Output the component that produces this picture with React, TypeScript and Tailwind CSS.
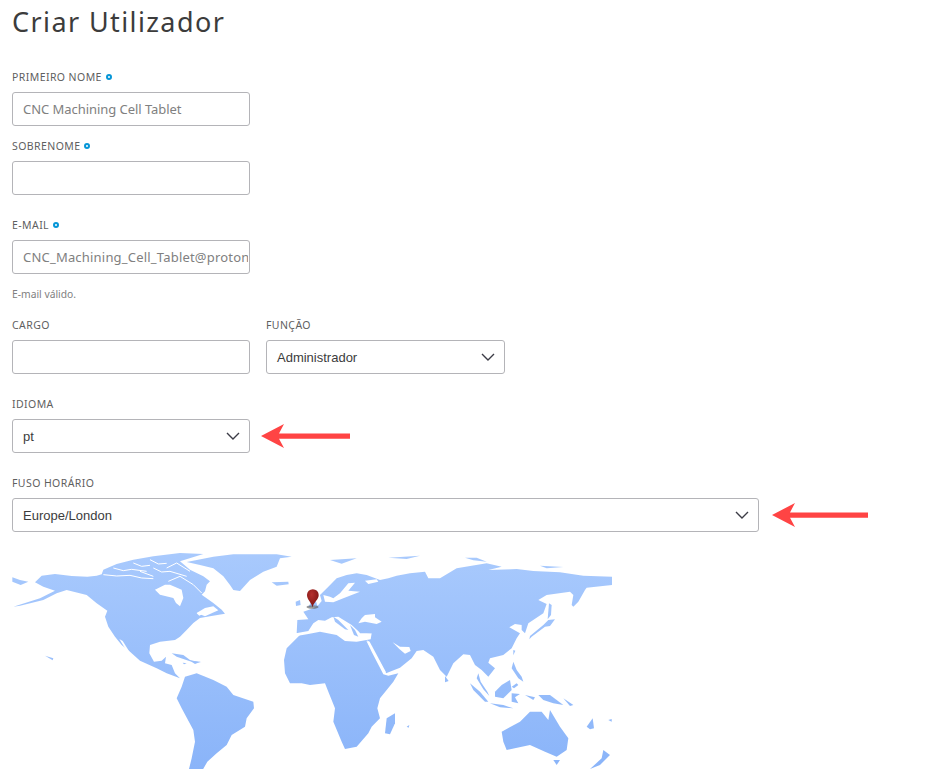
import React from "react";

const F = "[font-family:'Noto_Sans',sans-serif]";

function Dot() {
  return <span className="inline-block w-[6px] h-[6px] rounded-full border-[2px] border-[#0696d7] ml-[4px] mt-[-1px]" />;
}

function Label({ text, req }: { text: string; req?: boolean }) {
  return (
    <div className="flex items-center h-[14px] text-[10.5px] leading-[14px] tracking-[0.42px] text-[#5f5f5f] [font-family:'Noto_Sans',sans-serif]">
      {text}
      {req && <Dot />}
    </div>
  );
}

function TextBox({ value, className }: { value?: string; className?: string }) {
  return (
    <input
      readOnly
      defaultValue={value}
      className={`block w-[238px] h-[34px] mt-[8px] rounded-[3px] border border-[#b4b4b8] bg-white pl-[10px] pr-[1px] text-[13px] text-[#808080] outline-none [font-family:'Noto_Sans',sans-serif] ${className ?? ""}`}
    />
  );
}

function Chevron() {
  return (
    <svg width="14" height="8" viewBox="0 0 14 8" fill="none" className="shrink-0">
      <path d="M1 1 L7 7 L13 1" stroke="#3c3c46" strokeWidth="1.4" />
    </svg>
  );
}

function SelectBox({ value, className }: { value: string; className: string }) {
  return (
    <div className={`flex items-center justify-between h-[34px] mt-[8px] rounded-[3px] border border-[#b4b4b8] bg-white pl-[10px] pr-[9px] text-[13px] text-[#3c3c3c] [font-family:'Liberation_Sans',sans-serif] ${className}`}>
      <span className="mt-[1px]">{value}</span>
      <Chevron />
    </div>
  );
}

function Arrow({ w, className }: { w: number; className?: string }) {
  return (
    <svg width={w} height="24" viewBox={`0 0 ${w} 24`} className={`shrink-0 ${className ?? ""}`}>
      <path d={`M0 12 L23 0 L18 9.4 L${w} 9.4 L${w} 14.8 L18 14.8 L23 24 Z`} fill="#ff4444" />
    </svg>
  );
}

function WorldMap() {
  const z3 = "translate(0 545) scale(0.33333)";
  const z4 = "translate(300 545) scale(0.33333)";
  const cA = "translate(90 548) scale(0.33333)";
  const cB = "translate(280 570) scale(0.33333)";
  const cC = "translate(470 590) scale(0.33333)";
  const cD = "translate(140 630) scale(0.33333)";
  return (
    <svg width="600" height="221" viewBox="12 548 600 221" className="block mt-[16px]">
      <defs>
        <linearGradient id="land" gradientUnits="userSpaceOnUse" x1="0" y1="548" x2="0" y2="769">
          <stop offset="0" stopColor="#a9cafd" />
          <stop offset="1" stopColor="#8ab4f9" />
        </linearGradient>
        <radialGradient id="pin" cx="0.4" cy="0.3" r="0.7">
          <stop offset="0" stopColor="#b5302c" />
          <stop offset="1" stopColor="#7c1512" />
        </radialGradient>
        <filter id="soft" filterUnits="userSpaceOnUse" x="12" y="548" width="600" height="221">
          <feGaussianBlur stdDeviation="0.5" />
        </filter>
        <mask id="landmask" maskUnits="userSpaceOnUse" x="12" y="548" width="600" height="221">
          <g filter="url(#soft)">
            <g fill="#fff">
              <g transform={z3}>
                <path d="M37 97 L60 105 L85 110 L62 120 L37 110 Z" />
                <path d="M40 185 L120 160 L165 137 L130 125 L105 112 L125 92 L165 87 L215 93 L262 95 L290 92 L305 88 L310 74 L350 57 L400 44 L460 34 L540 24 L610 27 L540 49 L570 74 L610 94 L630 109 L620 119 L615 139 L605 149 L640 174 L665 194 L675 206 L630 214 L600 219 L580 234 L560 255 L540 275 L525 285 L480 290 L450 300 L448 325 L462 350 L485 347 L498 335 L495 355 L515 360 L525 385 L540 400 L500 385 L470 370 L420 347 L390 320 L365 300 L345 275 L325 245 L315 215 L322 197 L290 175 L260 150 L200 135 L170 145 L130 165 L60 182 Z" />
                <path d="M560 51 L640 35 L700 28 L830 28 L875 35 L840 40 L830 65 L790 80 L750 105 L720 138 L700 135 L690 120 L670 94 L640 70 L600 60 Z" />
                <path d="M815 112 L865 110 L866 118 L830 122 Z" />
                <path d="M555 395 L590 385 L640 405 L680 425 L700 450 L760 470 L762 490 L740 520 L735 545 L695 570 L680 600 L650 625 L622 650 L605 680 L565 680 L575 640 L585 590 L580 555 L545 490 L530 460 L545 425 Z" />
                <path d="M135 332 L160 340 L158 346 Z" />
              </g>
              <g transform={z4}>
                <path d="M-8 225 L25 223 L10 200 L40 190 L55 180 L65 168 L60 150 L85 125 L110 100 L140 90 L170 85 L200 90 L240 105 L265 100 L290 92 L330 85 L375 80 L385 100 L420 100 L470 70 L560 55 L605 65 L565 75 L650 72 L700 78 L780 82 L850 92 L936 95 L936 120 L860 128 L855 135 L835 170 L820 185 L815 180 L820 150 L810 140 L740 150 L715 165 L740 177 L730 205 L685 235 L675 265 L665 255 L665 240 L645 237 L628 247 L660 265 L650 280 L635 310 L610 330 L570 340 L565 353 L585 370 L565 395 L545 375 L525 360 L510 330 L490 328 L460 355 L440 395 L420 375 L400 335 L370 315 L350 318 L335 340 L300 368 L258 385 L245 360 L205 292 L195 285 L100 290 L40 290 L-10 265 Z" />
                <path d="M-48 345 L-40 310 L5 265 L85 258 L125 270 L150 282 L198 285 L215 320 L250 388 L265 392 L295 385 L280 410 L240 460 L232 490 L240 520 L215 545 L205 565 L170 605 L135 612 L125 590 L100 530 L105 490 L85 440 L75 415 L30 420 L5 415 L-30 415 L-45 385 Z" />
                <path d="M90 45 L170 40 L125 56 Z" />
                <path d="M265 38 L360 32 L320 42 Z" />
                <path d="M495 38 L530 38 L560 50 L520 46 Z" />
                <path d="M720 62 L790 66 L740 70 Z" />
                <path d="M605 560 L660 530 L690 500 L725 500 L745 525 L750 495 L780 545 L805 580 L800 615 L770 635 L735 620 L690 600 L620 615 L610 590 Z" />
                <path d="M760 645 L780 645 L770 660 Z" />
                <path d="M870 672 L905 640 L910 615 L930 630 L900 660 Z" />
                <path d="M925 525 L935 522 L935 530 Z" />
                <path d="M860 545 L878 520 L882 550 L870 553 Z" />
                <path d="M255 565 L260 520 L285 505 L285 535 L270 568 Z" />
                <path d="M435 393 L446 408 L435 412 Z" />
                <path d="M320 545 L328 540 L326 548 Z" />
              </g>
              <g transform={cC}>
                <path d="M25 250 L32 275 L52 305 L58 318 L40 298 L20 265 Z" />
                <path d="M0 280 L30 305 L55 335 L45 335 L10 300 Z" />
                <path d="M75 305 L95 285 L120 270 L125 300 L100 325 L75 320 Z" />
                <path d="M60 340 L100 345 L130 355 L90 352 Z" />
                <path d="M125 310 L150 312 L135 322 L145 340 L125 335 Z" />
                <path d="M205 315 L240 315 L280 345 L250 340 L220 330 Z" />
                <path d="M165 315 L195 322 L190 330 Z" />
                <path d="M130 215 L140 240 L155 260 L160 275 L145 265 L125 235 Z" />
                <path d="M125 290 L140 280 L145 285 L132 295 Z" />
                <path d="M130 180 L136 182 L130 196 Z" />
                <path d="M280 325 L310 345 L300 348 Z" />
                <path d="M237 40 L245 45 L243 75 L233 88 Z" />
                <path d="M235 90 L255 88 L240 108 L225 110 L185 140 L178 148 L180 138 L220 105 Z" />
              </g>
              <g transform={cB}>
                <path d="M80 75 L92 60 L110 100 L112 108 L85 112 L95 92 Z" />
                <path d="M47 95 L60 90 L62 105 L48 108 Z" />
              </g>
              <g transform={cD}>
                <path d="M95 70 L130 75 L150 90 L185 98 L150 94 L110 80 Z" />
                <path d="M150 92 L182 95 L165 102 Z" />
                <path d="M128 98 L140 100 L132 103 Z" />
              </g>
            </g>
            <g fill="#000">
              <g transform={cA}>
                <path d="M195 125 L225 110 L240 110 L275 125 L280 150 L270 175 L258 165 L250 150 L210 140 Z" />
                <path d="M320 195 L345 180 L370 175 L385 187 L345 205 Z" />
              </g>
              <g transform={cA} fill="none" stroke="#000" strokeWidth="3">
                <path d="M40 80 L80 84 L120 82 L155 90 L190 92" />
                <path d="M70 60 L100 68 L125 64 L170 70" />
                <path d="M130 45 L155 55 L180 52" />
                <path d="M190 60 L215 72 L240 70 L290 85" />
                <path d="M230 60 L260 45 L300 70" />
                <path d="M235 100 L270 85 L310 110 L335 135" />
                <path d="M180 35 L205 48 L230 46" />
                <path d="M150 70 L190 85" />
              </g>
              <g transform={z3}>
                <path d="M358 282 L368 288 L392 326 L384 325 Z" />
                <path d="M590 205 L605 198 L612 205 L598 212 Z" />
              </g>
              <g transform={cB}>
                <path d="M135 95 L130 75 L150 80 L160 85 L180 70 L205 40 L225 38 L205 62 L240 65 L190 85 L160 97 Z" />
                <path d="M48 190 L85 183 L100 160 L115 150 L135 152 L155 142 L175 140 L215 165 L240 188 L275 190 L272 208 L230 215 L195 213 L170 195 L120 185 L85 192 L50 198 Z" />
                <path d="M235 160 L245 145 L255 135 L285 132 L285 142 L305 155 L290 162 L255 155 Z" />
                <path d="M255 32 L290 28 L295 35 L265 42 Z" />
              </g>
              <g transform={z4}>
                <path d="M278 292 L300 305 L328 306 L332 318 L315 326 L298 312 Z" />
                <path d="M200 286 L209 290 L258 382 L252 386 Z" />
                <path d="M380 80 L400 78 L405 98 L388 98 Z" />
              </g>
            </g>
            <g fill="#fff">
              <g transform={cB}>
                <path d="M160 140 L175 150 L205 180 L195 178 L165 155 Z" />
                <path d="M210 165 L225 180 L235 200 L222 195 Z" />
                <path d="M236 178 L275 180 L275 190 L240 190 Z" />
              </g>
            </g>
          </g>
        </mask>
      </defs>
      <rect x="12" y="548" width="600" height="221" fill="url(#land)" mask="url(#landmask)" />
      <ellipse cx="312.5" cy="607" rx="6" ry="1.8" fill="#555" opacity="0.6" />
      <path d="M312.5 607.5 C311.5 602 307 600 307 595 A5.8 5.8 0 0 1 318.7 595 C318.7 600 313.5 602 312.5 607.5 Z" fill="url(#pin)" />
    </svg>
  );
}

export default function App() {
  return (
    <div className="w-[940px] h-[769px] overflow-hidden bg-white px-[12px] pt-[3px]">
      <h1 className={`text-[27px] leading-[37px] tracking-[1.4px] text-[#3c3c3c] ${F}`}>Criar Utilizador</h1>

      <div className="mt-[30px]"><Label text="PRIMEIRO NOME" req /></div>
      <TextBox value="CNC Machining Cell Tablet" className="tracking-[-0.05px]" />

      <div className="mt-[13px]"><Label text="SOBRENOME" req /></div>
      <TextBox />

      <div className="mt-[23px]"><Label text="E-MAIL" req /></div>
      <TextBox value="CNC_Machining_Cell_Tablet@protonmail.com" className="tracking-[0.2px]" />
      <div className={`mt-[13px] text-[10.3px] leading-[14px] text-[#808080] ${F}`}>E-mail válido.</div>

      <div className="flex gap-[16px] mt-[17px]">
        <div>
          <Label text="CARGO" />
          <TextBox />
        </div>
        <div>
          <Label text="FUNÇÃO" />
          <SelectBox value="Administrador" className="w-[239px]" />
        </div>
      </div>

      <div className="mt-[23px]"><Label text="IDIOMA" /></div>
      <div className="flex items-center">
        <SelectBox value="pt" className="w-[238px]" />
        <Arrow w={89} className="ml-[11px] mt-[8px]" />
      </div>

      <div className="mt-[23px]"><Label text="FUSO HORÁRIO" /></div>
      <div className="flex items-center">
        <SelectBox value="Europe/London" className="w-[747px]" />
        <Arrow w={96} className="ml-[13px] mt-[8px]" />
      </div>

      <WorldMap />
    </div>
  );
}
